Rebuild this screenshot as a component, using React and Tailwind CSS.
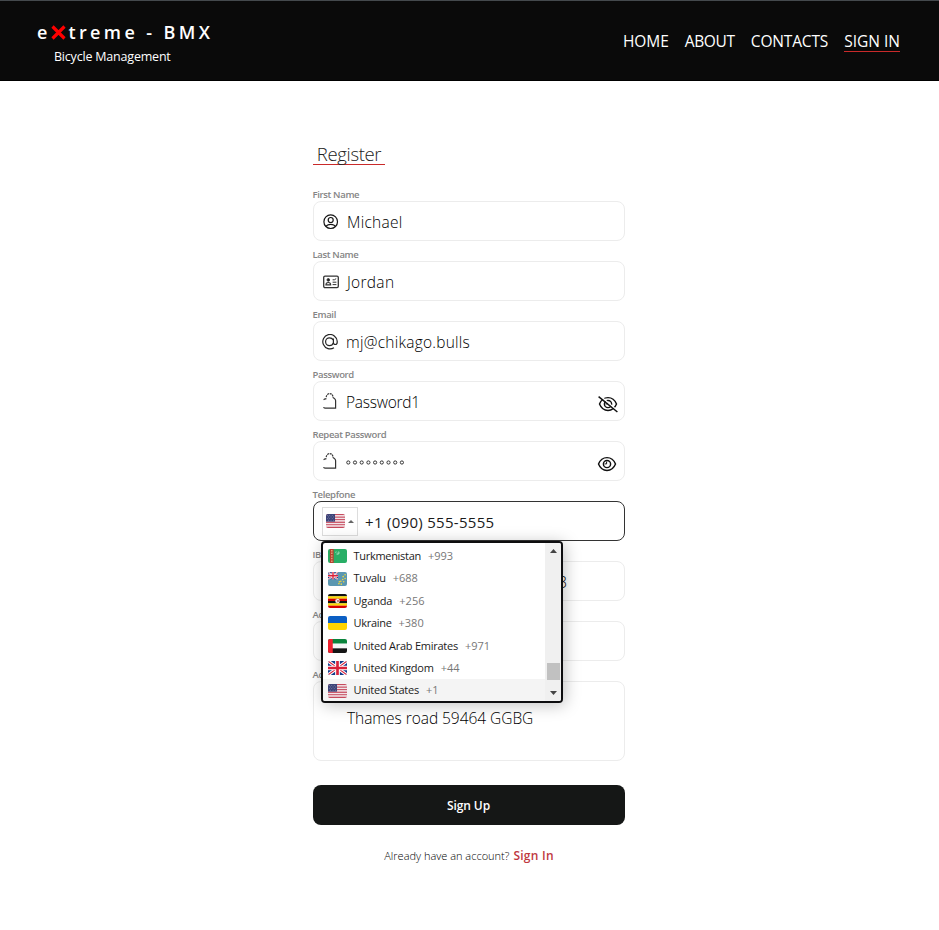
import React from "react";

function UserIcon() {
  return (
    <svg className="mt-[1px]" width="16" height="16" viewBox="0 0 16 16" fill="none" stroke="#151515" strokeWidth="1.2">
      <circle cx="7.7" cy="7.700" r="6.8" />
      <circle cx="7.7" cy="6" r="2.500" />
      <path d="M2.9 12.5C3.9 10.700 5.7 10.300 7.700 10.300s3.8.4 4.8 2.2" />
    </svg>
  );
}

function CardIcon() {
  return (
    <svg className="mt-[1px]" width="16" height="16" viewBox="0 0 16 16" fill="none" stroke="#333" strokeWidth="1.3">
      <rect x="0.7" y="2.2" width="14.6" height="11.4" rx="1.3" />
      <circle cx="5.3" cy="5.9" r="1.3" fill="#222" strokeWidth="0.9" />
      <path d="M2.9 10.9c0-2 1-2.4 2.4-2.4s2.4.4 2.4 2.4z" strokeWidth="1.1" />
      <path d="M9.600 5.800h1.800l1.800-1.200M9.600 8.200h3.800M9.600 10.600h3.800" strokeWidth="1" />
    </svg>
  );
}

function AtIcon() {
  return (
    <svg className="-ml-[2px] mt-[1px]" width="16" height="16" viewBox="0 0 16 16" fill="none" stroke="#252525" strokeWidth="1.2">
      <path d="M12 13.700A7.200 7.200 0 1 1 15.200 7.300v.9c0 2.900-3.800 3.100-3.800.2V4.500" />
      <path d="M11.200 5.900C10.300 4.300 8.900 3.800 7.500 3.800a3.900 3.900 0 0 0 0 7.800c1.700 0 3.200-.8 3.800-2.600" />
    </svg>
  );
}

function LockIcon() {
  return (
    <svg className="-ml-[2px]" width="16" height="18" viewBox="0 0 16 18" fill="none" stroke="#333" strokeWidth="1.2">
      <path d="M4.200 5.200C4.500 3 5.900 1.600 7.800 1.600s3 1.500 3.300 3.600" strokeDasharray="2 .7" />
      <path d="M10.800 5.300c.4.800 2.800 1.200 2.800 3.200v7.700H3c-.7 0-1.200-.4-1.300-1.200M1.600 7.700l1-.6 1.800-.4" />
    </svg>
  );
}

function EyeIcon({ off }) {
  return (
    <svg width="20" height="18" viewBox="0 0 20 18" fill="none" stroke="#111" strokeWidth="1.450">
      <path d="M1.500 9C3 5.300 6 2.600 10 2.600s7 2.700 8.500 6.400c-1.500 3.700-4.500 6.400-8.500 6.400S3 12.700 1.500 9z" />
      <circle cx="10" cy="9" r="3.600" />
      <path d="M9.600 6.600v2.300h-2" strokeWidth="1" />
      {off && (
        <>
          <path d="M2.500 1.100L20 16.200" stroke="#fff" strokeWidth="1.500" />
          <path d="M.6 1.600L19.400 17" />
        </>
      )}
    </svg>
  );
}

function UnionJack() {
  return (
    <>
      <rect width="20" height="15" fill="#123a8c" />
      <path d="M0 0l20 15M20 0L0 15" stroke="#fff" strokeWidth="3.400" />
      <path d="M0 0l20 15M20 0L0 15" stroke="#d8203a" strokeWidth="1.100" />
      <path d="M10 0v15M0 7.500h20" stroke="#fff" strokeWidth="5" />
      <path d="M10 0v15M0 7.500h20" stroke="#d8203a" strokeWidth="2.800" />
    </>
  );
}

function Stripes({ colors }) {
  const h = 15 / colors.length;
  return colors.map((c, i) => <rect key={i} y={i * h} width="20" height={h + 0.05} fill={c} />);
}

const dots = (list, r, fill) => list.map(([x, y]) => <circle key={`${x}-${y}`} cx={x} cy={y} r={r} fill={fill} />);

const flagArt = {
  tm: (
    <>
      <rect width="20" height="15" fill="#28ae66" />
      <rect x="2" width="4" height="15" fill="#b5402f" />
      <path d="M4 1v13" stroke="#e2a07b" strokeWidth="1.600" strokeDasharray="1.600 1.200" />
      <path d="M10.800 2.200a2 2 0 1 1-2.400 2.800 2 2 0 0 0 2.400-2.800z" fill="#8fd8b0" />
      {dots([[8.500, 2.500], [9.500, 3.800], [8, 4]], 0.4, "#d8f2e2")}
    </>
  ),
  tv: (
    <>
      <rect width="20" height="15" fill="#5b97b1" />
      <svg width="10.500" height="8" viewBox="0 0 20 15" preserveAspectRatio="none"><UnionJack /></svg>
      {dots([[18, 3], [16, 5], [18, 7], [15.500, 8], [13.500, 10], [16.500, 10.500], [11.500, 12.500], [14, 13], [12, 10.500]], 0.85, "#f0d83c")}
    </>
  ),
  ug: (
    <>
      <Stripes colors={["#111", "#fcdc04", "#d90000", "#111", "#fcdc04", "#d90000"]} />
      <circle cx="10" cy="7.500" r="2.400" fill="#eee" />
      <path d="M9 6l1.500 1.500-1 1.500M11 6.500v2" stroke="#a33" strokeWidth=".7" fill="none" />
    </>
  ),
  ua: <Stripes colors={["#0b5fc4", "#ffd400"]} />,
  ae: (
    <>
      <Stripes colors={["#0b843c", "#f6f6f6", "#151515"]} />
      <rect width="5" height="15" fill="#ee202e" />
    </>
  ),
  gb: <UnionJack />,
  us: (
    <>
      <Stripes colors={["#c64a5d", "#f2e4e8", "#c64a5d", "#f2e4e8", "#c64a5d", "#f2e4e8", "#c64a5d", "#f2e4e8", "#c64a5d", "#f2e4e8", "#c64a5d"]} />
      <rect width="9.500" height="8.200" fill="#3d4479" />
      {dots([[1.500, 1.500], [4, 1.500], [6.500, 1.500], [2.800, 3.200], [5.300, 3.200], [7.800, 3.200], [1.500, 4.900], [4, 4.900], [6.500, 4.900], [2.800, 6.600], [5.300, 6.600], [7.800, 6.600]], 0.4, "#b9bcd2")}
    </>
  ),
};

function Flag({ code }) {
  return (
    <svg className="block h-[14px] w-[19px] shrink-0 rounded-[2px]" viewBox="0 0 20 15" preserveAspectRatio="none">
      {flagArt[code]}
    </svg>
  );
}

const countries = [
  ["tm", "Turkmenistan", "+993", "tracking-[-0.3px]"],
  ["tv", "Tuvalu", "+688", "tracking-[-0.3px]"],
  ["ug", "Uganda", "+256", "tracking-[-0.15px]"],
  ["ua", "Ukraine", "+380", "tracking-[-0.3px]"],
  ["ae", "United Arab Emirates", "+971", "tracking-[-0.25px]"],
  ["gb", "United Kingdom", "+44", "tracking-[-0.2px]"],
  ["us", "United States", "+1", "tracking-[-0.25px]"],
];

function CountryList() {
  return (
    <div className="absolute left-[7px] top-[39px] z-10 flex h-[162px] w-[242px] overflow-hidden rounded-[4px] border-2 border-[#0d0d0f] bg-white shadow-[2px_2px_16px_rgba(0,0,0,0.25)]">
      <div className="flex flex-1 flex-col pt-[2px]">
        {countries.map(([code, name, dial, spacing]) => (
          <div key={code} className={`flex h-[22.400px] shrink-0 items-center pl-[5px] text-[11px] ${code === "us" ? "bg-[#f4f4f4]" : ""}`}>
            <Flag code={code} />
            <span className={`ml-[6.500px] whitespace-nowrap text-[#1b1b1b] ${spacing}`}>{name}</span>
            <span className="ml-[7px] text-[#777]">{dial}</span>
          </div>
        ))}
      </div>
      <div className="flex w-[16px] flex-col items-center bg-[#f0f0f0]">
        <svg className="mt-[6px]" width="7" height="4" viewBox="0 0 7 4"><path d="M3.500 0L7 4H0z" fill="#444" /></svg>
        <div className="mt-[110px] h-[17px] w-[13px] bg-[#c1c1c1]" />
        <svg className="mt-[11px]" width="7" height="4" viewBox="0 0 7 4"><path d="M0 0h7L3.500 4z" fill="#444" /></svg>
      </div>
    </div>
  );
}

function FieldLabel({ children }) {
  return <div className="-ml-[0.500px] -mt-[1px] h-[13px] whitespace-nowrap text-[9.500px] font-semibold leading-[13px] tracking-[-0.340px] text-[#858585]">{children}</div>;
}

function Field({ label, icon, value, valueClass = "", trailing, className = "" }) {
  return (
    <div className="pt-[14px]">
      <FieldLabel>{label}</FieldLabel>
      <div className={`-mb-[6px] flex h-10 items-center rounded-lg border border-[#ececec] px-[9px] ${className}`}>
        <span className="flex w-4 shrink-0 justify-center">{icon}</span>
        <span className={`ml-2 flex-1 whitespace-nowrap pt-[3px] font-light text-black ${valueClass}`}>{value}</span>
        {trailing}
      </div>
    </div>
  );
}

export default function App() {
  return (
    <div className="h-[930px] w-[939px] overflow-hidden bg-white font-['Open_Sans','Noto_Sans',sans-serif]">
      <header className="flex h-[81px] justify-between border-t border-b border-t-[#44494d] border-b-black bg-[#0a0a0a] text-white">
        <div className="pl-[37px] pt-[19px]">
          <div className="flex h-[24px] items-center text-[18px] font-semibold leading-[24px]">
            <span>e</span>
            <svg className="ml-[4px] mr-[2px]" width="15" height="15" viewBox="0 0 15 15"><path d="M1.500 1.500l12 12M13.500 1.500l-12 12" stroke="#f00" strokeWidth="3.200" /></svg>
            <span className="whitespace-pre tracking-[3.400px]">treme - BMX</span>
          </div>
          <div className="ml-[17px] mt-[2px] text-[12.500px] leading-[22px] tracking-[-0.2px]">Bicycle Management</div>
        </div>
        <nav className="mr-[39px] mt-[30px] flex gap-4 text-[15.500px] leading-[21px]">
          <a className="h-[21px] tracking-[-0.070px]">HOME</a>
          <a className="h-[21px] tracking-[-0.330px]">ABOUT</a>
          <a className="h-[21px] tracking-[-0.150px]">CONTACTS</a>
          <a className="h-[21px] border-b border-[#c92a2a]">SIGN IN</a>
        </nav>
      </header>
      <main className="ml-[313px] w-[312px] pt-[62px]">
        <h1 className="h-[22px] w-[72px] border-b border-[#c92a2a] text-center text-[18.500px] font-light leading-[21px] tracking-[-0.350px] text-[#222]">Register</h1>
        <div className="mt-[10px]">
          <Field label="First Name" icon={<UserIcon />} value="Michael" valueClass="text-[15.500px] tracking-[0.280px]" />
          <Field label="Last Name" icon={<CardIcon />} value="Jordan" valueClass="text-[15.500px] tracking-[0.300px]" />
          <Field label="Email" icon={<AtIcon />} value="mj@chikago.bulls" valueClass="!ml-[7px] text-[15.500px] tracking-[0.250px]" />
          <Field label="Password" icon={<LockIcon />} value="Password1" valueClass="!ml-[7px] text-[15.500px] tracking-[-0.250px]" trailing={<span className="-mr-[3px] mt-[5px]"><EyeIcon off /></span>} />
          <Field label="Repeat Password" icon={<LockIcon />} valueClass="!ml-[7px]" value={<svg className="-mt-[1px]" width="60" height="6" viewBox="0 0 60 6" fill="none" stroke="#333">{Array.from({ length: 9 }, (_, i) => <circle key={i} cx={2.300 + i * 6.700} cy="3.500" r="1.600" />)}</svg>} trailing={<span className="-mr-[2px] mt-[5px]"><EyeIcon /></span>} />
          <div className="pt-[14px]">
            <FieldLabel>Telepfone</FieldLabel>
            <div className="relative -mb-[6px] flex h-10 items-center rounded-lg border border-[#333] pl-2">
              <div className="flex h-[29px] w-9 items-center gap-[3px] border border-[#ddd] pl-[3px]">
                <Flag code="us" />
                <svg width="6" height="3" viewBox="0 0 6 3"><path d="M3 0l3 3H0z" fill="#666" /></svg>
              </div>
              <span className="ml-[7px] whitespace-nowrap pt-[2px] text-[15px] tracking-[0.300px] text-[#1b1b1b]">+1 (090) 555-5555</span>
              <CountryList />
            </div>
          </div>
          <Field label="IBAN" value="3" valueClass="text-right pr-[48px] text-[15.500px]" />
          <Field label="Account" value="" />
          <Field label="Address" value="Thames road 59464 GGBG" valueClass="text-[15.500px] tracking-[-0.040px] self-start pt-[25px]" className="!h-20" />
        </div>
        <button className="mt-[30px] block h-10 w-full rounded-lg bg-[#151716] pr-[1px] pt-[2px] text-[12px] font-semibold tracking-[-0.080px] text-white">Sign Up</button>
        <p className="mt-[22px] flex h-[18px] items-center justify-center gap-1 whitespace-nowrap text-[11px] font-light text-black">
          <span>Already have an account?</span>
          <a className="text-[12px] font-semibold tracking-[0.250px] text-[#c0393f]">Sign In</a>
        </p>
      </main>
    </div>
  );
}
